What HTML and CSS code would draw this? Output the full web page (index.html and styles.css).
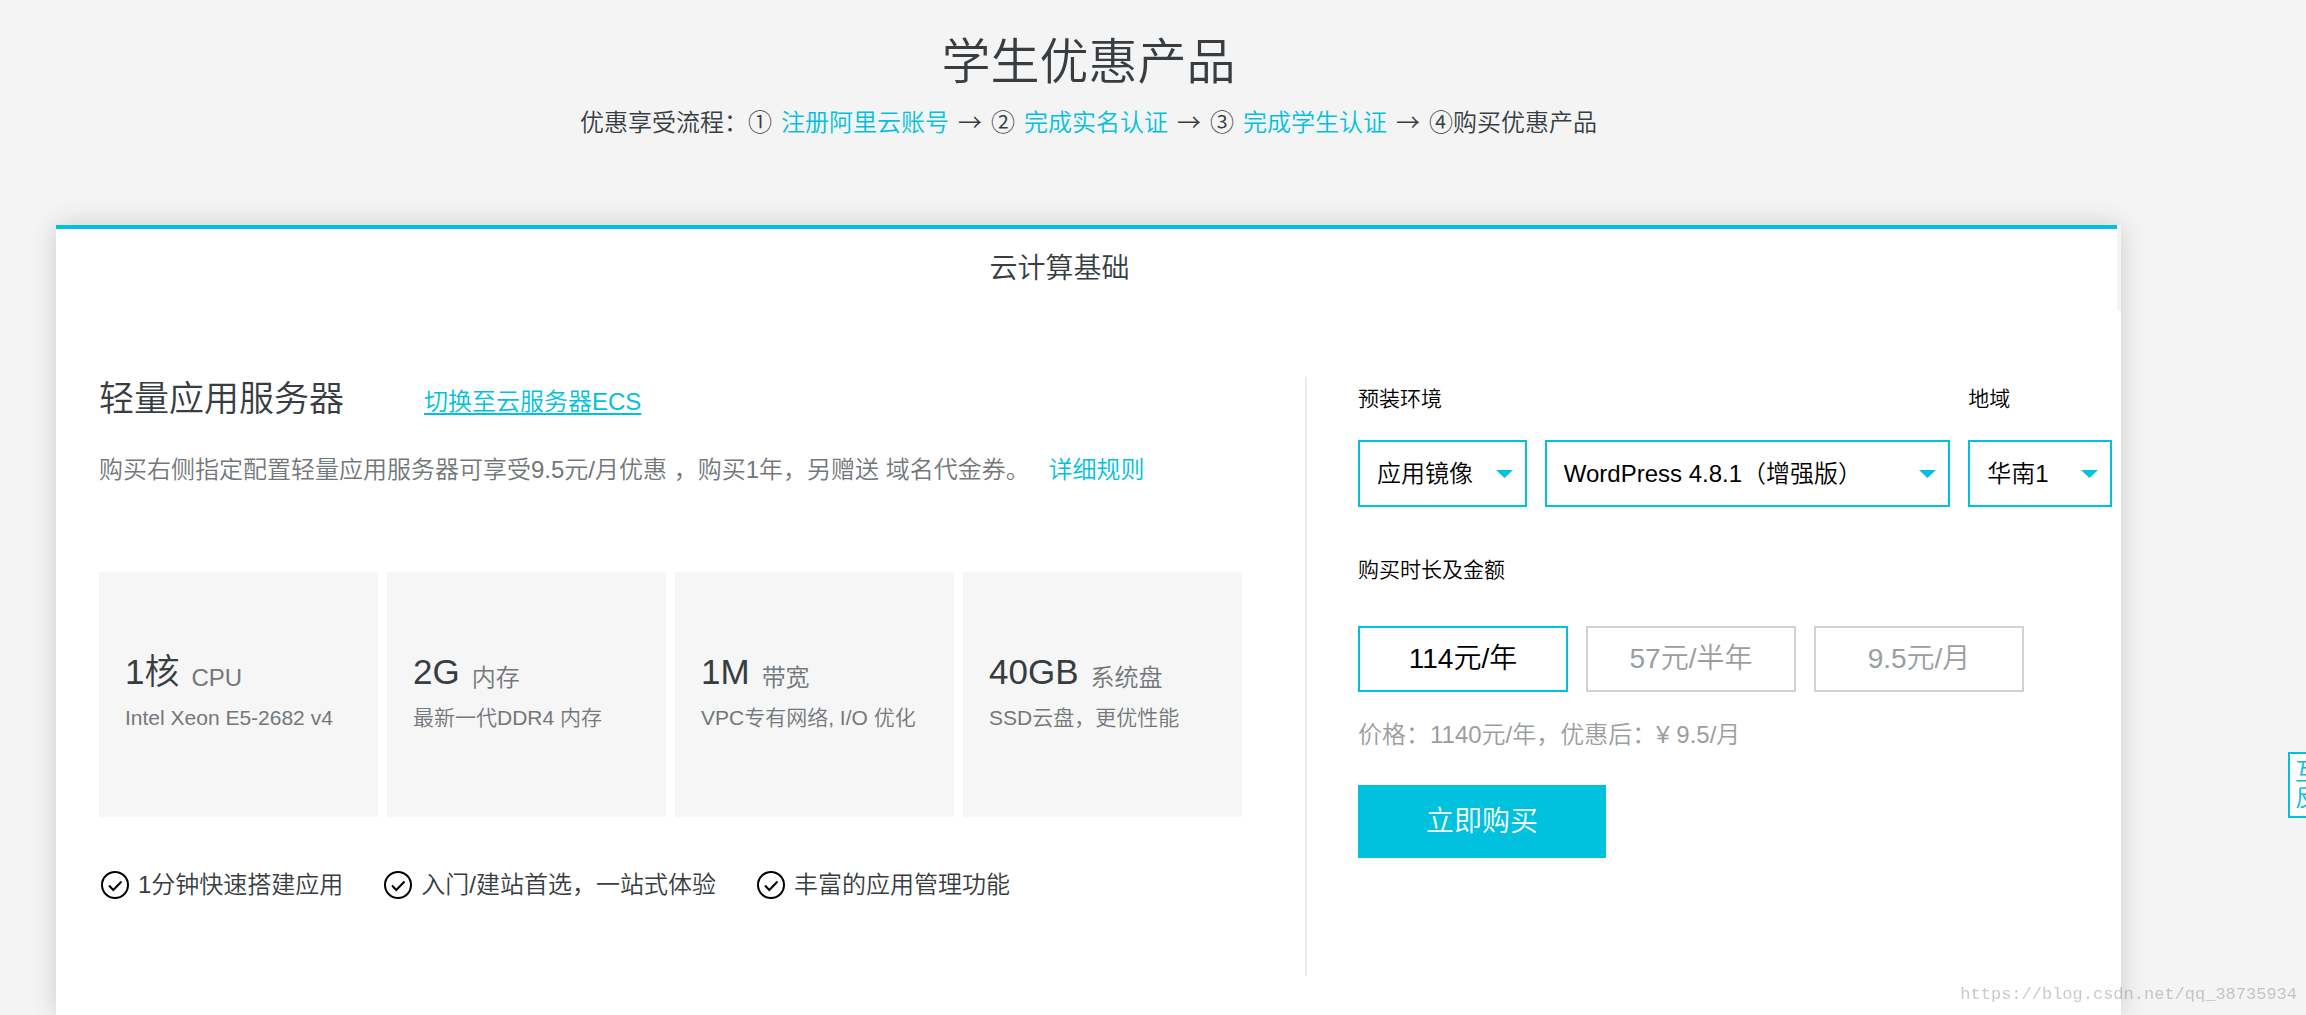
FILE: index.html
```html
<!DOCTYPE html>
<html lang="zh-CN">
<head>
<meta charset="utf-8">
<meta name="viewport" content="width=device-width, initial-scale=1">
<title>学生优惠产品</title>
<link rel="stylesheet" href="styles.css">
</head>
<body>
<svg class="sprite" aria-hidden="true">
  <symbol id="check" viewBox="0 0 28 28">
    <circle cx="14" cy="14" r="13" fill="none" stroke="#000" stroke-width="2"/>
    <path d="M8 14.5l4.300 4.500 8.200-8.500" fill="none" stroke="#000" stroke-width="2"/>
  </symbol>
</svg>
<main class="page">
  <header class="hero">
    <h1 class="hero-title">学生优惠产品</h1>
    <p class="steps">
      <span>优惠享受流程：①</span><a href="#register">注册阿里云账号</a><span>→</span>
      <span>②</span><a href="#realname">完成实名认证</a><span>→</span>
      <span>③</span><a href="#student">完成学生认证</a><span>→</span>
      <span>④购买优惠产品</span>
    </p>
  </header>

  <section class="card">
    <div class="tabs">
      <h2 class="tab">云计算基础</h2>
    </div>
    <div class="panel">
      <div class="product">
        <div class="product-head">
          <h3 class="product-title">轻量应用服务器</h3>
          <a class="switch" href="#ecs">切换至云服务器ECS</a>
        </div>
        <p class="intro">购买右侧指定配置轻量应用服务器可享受9.5元/月优惠 ，购买1年，另赠送 域名代金券。 <a class="rules" href="#rules">详细规则</a></p>
        <ul class="specs">
          <li class="spec"><p class="spec-head"><strong>1核</strong><span>CPU</span></p><p class="spec-note">Intel Xeon E5-2682 v4</p></li>
          <li class="spec"><p class="spec-head"><strong>2G</strong><span>内存</span></p><p class="spec-note">最新一代DDR4 内存</p></li>
          <li class="spec"><p class="spec-head"><strong>1M</strong><span>带宽</span></p><p class="spec-note">VPC专有网络, I/O 优化</p></li>
          <li class="spec"><p class="spec-head"><strong>40GB</strong><span>系统盘</span></p><p class="spec-note">SSD云盘，更优性能</p></li>
        </ul>
        <ul class="features">
          <li><svg class="icon"><use href="#check"/></svg>1分钟快速搭建应用</li>
          <li><svg class="icon"><use href="#check"/></svg>入门/建站首选，一站式体验</li>
          <li><svg class="icon"><use href="#check"/></svg>丰富的应用管理功能</li>
        </ul>
      </div>

      <form class="order">
        <div class="fields">
          <label class="label label-wide" for="image-type">预装环境</label>
          <label class="label" for="region">地域</label>
          <select class="select" id="image-type"><option>应用镜像</option></select>
          <select class="select" aria-label="镜像版本"><option>WordPress 4.8.1（增强版）</option></select>
          <select class="select" id="region"><option>华南1</option></select>
        </div>
        <p class="label" id="term">购买时长及金额</p>
        <div class="terms" role="group" aria-labelledby="term">
          <button class="term term-on" type="button" aria-pressed="true">114元/年</button>
          <button class="term" type="button" aria-pressed="false">57元/半年</button>
          <button class="term" type="button" aria-pressed="false">9.5元/月</button>
        </div>
        <p class="price">价格：1140元/年，优惠后：¥ 9.5/月</p>
        <button class="buy" type="submit">立即购买</button>
      </form>
    </div>
  </section>
</main>
<a class="feedback" href="#feedback">互动<br>反馈</a>
<p class="watermark">https://blog.csdn.net/qq_38735934</p>
</body>
</html>
```
FILE: styles.css
```css
:root {
  --cyan: #00c1de;
  --ink: #373d41;
  --muted: #73777a;
  --pale: #9b9ea0;
  --page: #f4f4f4;
}

* { box-sizing: border-box; }

body {
  margin: 0;
  overflow: hidden;
  background: var(--page);
  color: var(--ink);
  font: 350 24px/36px "Liberation Sans", "Noto Sans CJK SC", sans-serif;
}

h1, h2, h3, p, ul { margin: 0; padding: 0; font-weight: inherit; }
ul { list-style: none; }
a { color: var(--cyan); text-decoration: none; }
button, select { font: inherit; cursor: pointer; }
.sprite { display: none; }

.page {
  display: flex;
  flex-direction: column;
  min-height: 100vh;
  padding: 22px 185px 0 56px;
}

/* Page heading */
.hero {
  padding-bottom: 86px;
  text-align: center;
  font-family: "Noto Sans CJK SC", sans-serif;
}
.hero-title { font-size: 49px; line-height: 72px; }
.steps {
  display: flex;
  flex-wrap: wrap;
  justify-content: center;
  gap: 9px;
  margin-top: 9px;
}

/* Product card */
.card {
  flex: 1;
  background: #fff;
  box-shadow: 0 0 24px rgba(0, 0, 0, .16);
}
.tabs { padding-right: 4px; background: var(--page); }
.tab {
  padding: 20px 54px 22px 0;
  border-top: 4px solid var(--cyan);
  background: #fff;
  font-size: 28px;
  line-height: 40px;
  text-align: center;
}
.panel {
  display: grid;
  grid-template-columns: minmax(0, 1143fr) minmax(0, 807fr);
  gap: 63px;
  padding: 66px 9px 40px 43px;
}

.product-head { display: flex; align-items: center; gap: 80px; }
.product-title { font-size: 35px; line-height: 44px; }
.switch {
  padding-top: 6px;
  text-decoration: underline;
  text-decoration-thickness: 2px;
  text-underline-offset: 3px;
}
.intro { margin-top: 31px; color: var(--muted); }
.rules { margin-left: 12px; }

.specs {
  display: grid;
  grid-template-columns: repeat(4, minmax(0, 1fr));
  gap: 9px;
  margin-top: 84px;
}
.spec {
  padding: 78px 26px 81px;
  background: #f6f6f6;
  color: var(--muted);
}
.spec-head { display: flex; align-items: flex-end; gap: 12px; }
.spec-head strong {
  padding-bottom: 2px;
  color: var(--ink);
  font-size: 35px;
  font-weight: inherit;
  line-height: 44px;
}
.spec-note { margin-top: 4px; font-size: 21px; }

.features {
  display: flex;
  flex-wrap: wrap;
  gap: 12px 41px;
  margin-top: 50px;
  padding-left: 2px;
}
.features li { display: flex; align-items: center; gap: 9px; }
.icon { width: 28px; height: 28px; }

/* Order form */
.order {
  padding: 0 0 118px 51px;
  border-left: 2px solid #ebebeb;
  color: #000;
}
.fields {
  display: grid;
  grid-template-columns: 169fr 406fr 144fr;
  gap: 19px 18px;
  margin-bottom: 41px;
}
.label { font-size: 21px; line-height: 44px; }
.label-wide { grid-column: span 2; }
.select {
  min-width: 0;
  height: 67px;
  padding: 0 34px 0 17px;
  border: 2px solid var(--cyan);
  border-radius: 0;
  color: #000;
  appearance: none;
  background: #fff url("data:image/svg+xml,%3Csvg xmlns='http://www.w3.org/2000/svg' width='17' height='8'%3E%3Cpath d='M0 0h17L8.500 8z' fill='%2300c1de'/%3E%3C/svg%3E") no-repeat right 12px center;
}
.terms { display: flex; flex-wrap: wrap; gap: 18px; margin-top: 34px; }
.term {
  width: 210px;
  height: 66px;
  padding: 0;
  border: 2px solid #d2d2d2;
  background: #fff;
  color: var(--pale);
  font-size: 28px;
}
.term-on { border-color: var(--cyan); color: #000; }
.price { margin-top: 25px; color: var(--pale); }
.buy {
  width: 248px;
  height: 73px;
  margin-top: 32px;
  padding: 0;
  border: 0;
  background: var(--cyan);
  color: #fff;
  font-size: 28px;
}

/* Overlays pinned to the window */
.feedback {
  position: fixed;
  right: -44px;
  bottom: 197px;
  width: 62px;
  padding: 5px 4px 5px 5px;
  border: 2px solid var(--cyan);
  background: #fff;
  line-height: 26px;
  white-space: nowrap;
}
.watermark {
  position: fixed;
  right: 9px;
  bottom: 8px;
  color: rgba(150, 150, 140, .5);
  font: 17px/24px "Liberation Mono", monospace;
}
```
